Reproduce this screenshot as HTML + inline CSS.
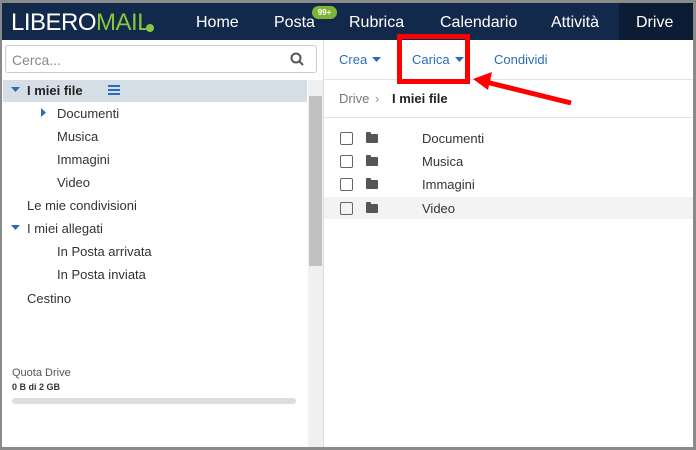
<!DOCTYPE html>
<html><head><style>
*{margin:0;padding:0;box-sizing:border-box}
body{width:696px;height:450px;overflow:hidden;background:#fff;font-family:"Liberation Sans",sans-serif;position:relative}
.frame{position:absolute;left:0;top:0;width:696px;height:450px;border:3px solid #8a8a8a;border-left-width:2px}
.hdr{position:absolute;left:2px;top:3px;width:691px;height:37px;background:#13294b}
.nav{position:absolute;top:11px;color:#fff;font-size:16px}
.abs{position:absolute}
.t{position:absolute;font-size:13px;color:#333}
.blue{color:#2a6cb8}
.cb{position:absolute;left:340px;width:13px;height:13px;border:1.5px solid #666;border-radius:2px}
.fold{position:absolute;left:366px;width:12px;height:9px;background:#555;border-radius:1px}
.fold:before{content:"";position:absolute;left:0;top:-2px;width:5px;height:3px;background:#555;border-radius:1px 1px 0 0}
</style></head><body>
<div class="hdr">
 <div class="abs" style="left:9px;top:6px;font-size:24px;color:#fff;letter-spacing:-0.5px">LIBERO<span style="color:#8ac53f">MAIL</span></div>
 <div class="abs" style="left:144px;top:21px;width:8px;height:8px;border-radius:50%;background:#8ac53f"></div>
 <div class="abs" style="left:617px;top:0;width:74px;height:37px;background:#0c1c34"></div>
 <div class="nav" style="left:194px">Home</div>
 <div class="nav" style="left:272px">Posta</div>
 <div class="abs" style="left:310px;top:3px;width:25px;height:13px;border-radius:7px;background:#7fb537;color:#fff;font-size:8px;font-weight:bold;text-align:center;line-height:13px">99+</div>
 <div class="nav" style="left:347px">Rubrica</div>
 <div class="nav" style="left:438px">Calendario</div>
 <div class="nav" style="left:549px">Attività</div>
 <div class="nav" style="left:634px">Drive</div>
</div>
<!-- left -->
<div class="abs" style="left:5px;top:45px;width:312px;height:28px;border:1px solid #ccc;border-radius:3px"></div>
<div class="t" style="left:12px;top:52px;color:#888;font-size:14px">Cerca...</div>
<svg class="abs" style="left:290px;top:52px" width="14" height="14"><circle cx="6" cy="6" r="4.5" fill="none" stroke="#555" stroke-width="2"/><line x1="9.5" y1="9.5" x2="13" y2="13" stroke="#555" stroke-width="2"/></svg>
<div class="abs" style="left:3px;top:80px;width:304px;height:22px;background:#d5dde6"></div>
<div class="abs" style="left:308px;top:80px;width:15px;height:367px;background:#f0f0f0"></div>
<div class="abs" style="left:309px;top:96px;width:13px;height:170px;background:#c1c1c1"></div>
<div class="abs" style="left:323px;top:40px;width:1px;height:408px;background:#ddd"></div>
<svg class="abs" style="left:11px;top:87px" width="9" height="6"><path d="M0 0H9L4.5 5Z" fill="#2a6cb8"/></svg>
<div class="t" style="left:27px;top:83px;font-weight:bold;font-size:13px;color:#222">I miei file</div>
<div class="abs" style="left:108px;top:85px;width:12px;height:2px;background:#2a6cb8;box-shadow:0 4px #2a6cb8,0 8px #2a6cb8"></div>
<svg class="abs" style="left:41px;top:108px" width="6" height="9"><path d="M0 0V9L5 4.5Z" fill="#2a6cb8"/></svg>
<div class="t" style="left:57px;top:106px">Documenti</div>
<div class="t" style="left:57px;top:129px">Musica</div>
<div class="t" style="left:57px;top:152px">Immagini</div>
<div class="t" style="left:57px;top:175px">Video</div>
<div class="t" style="left:27px;top:198px">Le mie condivisioni</div>
<svg class="abs" style="left:11px;top:225px" width="9" height="6"><path d="M0 0H9L4.5 5Z" fill="#2a6cb8"/></svg>
<div class="t" style="left:27px;top:221px">I miei allegati</div>
<div class="t" style="left:57px;top:244px">In Posta arrivata</div>
<div class="t" style="left:57px;top:267px">In Posta inviata</div>
<div class="t" style="left:27px;top:291px">Cestino</div>
<div class="t" style="left:12px;top:367px;font-size:11px;color:#555">Quota Drive</div>
<div class="t" style="left:12px;top:382px;font-size:9px;font-weight:bold">0 B di 2 GB</div>
<div class="abs" style="left:12px;top:398px;width:284px;height:6px;border-radius:3px;background:#ddd"></div>
<!-- right -->
<div class="abs" style="left:324px;top:79px;width:370px;height:1px;background:#e5e5e5"></div>
<div class="abs" style="left:324px;top:117px;width:370px;height:1px;background:#e5e5e5"></div>
<div class="t blue" style="left:339px;top:52px">Crea</div>
<svg class="abs" style="left:372px;top:57px" width="9" height="5"><path d="M0 0H9L4.5 5Z" fill="#2a6cb8"/></svg>
<div class="t blue" style="left:412px;top:52px">Carica</div>
<svg class="abs" style="left:455px;top:57px" width="9" height="5"><path d="M0 0H9L4.5 5Z" fill="#2a6cb8"/></svg>
<div class="t blue" style="left:494px;top:52px">Condividi</div>
<div class="t" style="left:339px;top:91px;color:#777">Drive</div>
<div class="t" style="left:375px;top:91px;color:#999">›</div>
<div class="t" style="left:392px;top:91px;font-weight:bold;color:#222">I miei file</div>
<div class="abs" style="left:324px;top:197px;width:370px;height:22px;background:#f3f3f3"></div>
<div class="cb" style="top:132px"></div><div class="fold" style="top:134px"></div><div class="t" style="left:422px;top:131px">Documenti</div>
<div class="cb" style="top:155px"></div><div class="fold" style="top:157px"></div><div class="t" style="left:422px;top:154px">Musica</div>
<div class="cb" style="top:178px"></div><div class="fold" style="top:180px"></div><div class="t" style="left:422px;top:177px">Immagini</div>
<div class="cb" style="top:202px"></div><div class="fold" style="top:204px"></div><div class="t" style="left:422px;top:201px">Video</div>
<!-- annotation -->
<div class="abs" style="left:397px;top:34px;width:73px;height:50px;border:5px solid #f00"></div>
<svg class="abs" style="left:470px;top:70px" width="105" height="40"><line x1="101" y1="33" x2="16" y2="12" stroke="#f00" stroke-width="5"/><path d="M3 9L22 2L18 20Z" fill="#f00"/></svg>
<div class="frame"></div>
</body></html>
